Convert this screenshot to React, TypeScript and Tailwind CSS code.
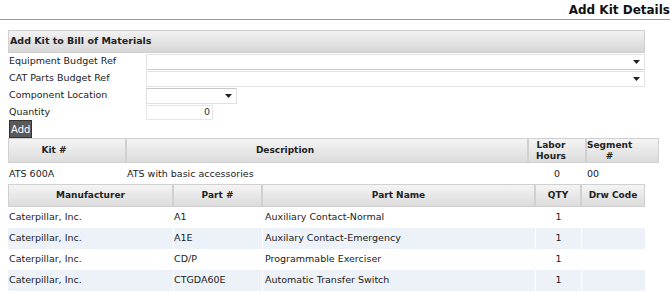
import React from "react";

const font = { fontFamily: '"DejaVu Sans", Verdana, sans-serif' };

function Caret() {
  return (
    <svg width="7" height="4" viewBox="0 0 7 4" className="shrink-0">
      <polygon points="0,0 7,0 3.5,4" fill="#222" />
    </svg>
  );
}

const parts = [
  ["Caterpillar, Inc.", "A1", "Auxiliary Contact-Normal", "1"],
  ["Caterpillar, Inc.", "A1E", "Auxilary Contact-Emergency", "1"],
  ["Caterpillar, Inc.", "CD/P", "Programmable Exerciser", "1"],
  ["Caterpillar, Inc.", "CTGDA60E", "Automatic Transfer Switch", "1"],
];

const thBase =
  "bg-gradient-to-b from-[#f4f4f4] to-[#dcdcdc] border border-[#d0d0d0] font-bold text-[9px] text-[#222] text-center flex items-center";
const th = thBase + " justify-center";

export default function App() {
  return (
    <div className="w-[670px] h-[294px] bg-white text-[9.5px] text-[#222] overflow-hidden" style={font}>
      <div className="h-[20px] border-b border-[#9a9a9a] flex items-center justify-end pr-[0px]">
        <span className="text-[12px] font-bold text-[#111]">Add Kit Details</span>
      </div>
      <div className="pl-[8px] pr-[25px] pt-[10px]">
        <div className="h-[23px] bg-gradient-to-b from-[#f2f2f2] to-[#d6d6d6] border border-[#cfcfcf] flex items-center pl-[1px] font-bold text-[9.5px]">
          Add Kit to Bill of Materials
        </div>
        <div className="flex items-center h-[17px]">
          <div className="w-[138px] pl-[1px]">Equipment Budget Ref</div>
          <div className="flex-1 h-[16px] border border-[#e3e3e3] border-b-[#cfcfcf] flex items-center justify-end pr-[4px]">
            <Caret />
          </div>
        </div>
        <div className="flex items-center h-[17px]">
          <div className="w-[138px] pl-[1px]">CAT Parts Budget Ref</div>
          <div className="flex-1 h-[16px] border border-[#e3e3e3] flex items-center justify-end pr-[4px]">
            <Caret />
          </div>
        </div>
        <div className="flex items-center h-[17px]">
          <div className="w-[138px] pl-[1px]">Component Location</div>
          <div className="w-[91px] h-[16px] border border-[#e0e0e0] border-t-[#c8c8c8] flex items-center justify-end pr-[4px]">
            <Caret />
          </div>
        </div>
        <div className="flex items-center h-[16px] pt-[1px]">
          <div className="w-[138px] pl-[1px]">Quantity</div>
          <div className="w-[67px] h-[15px] border border-[#e6e6e6] flex items-center justify-end pr-[2px] text-[#333]">
            0
          </div>
        </div>
        <div className="pl-[1px]">
          <div className="inline-flex items-center h-[18px] px-[1px] bg-[#5a5a5a] border border-[#333] text-white text-[10px]">
            Add
          </div>
        </div>
        <div className="grid grid-cols-[118px_402px_58px_1fr] h-[25px] leading-[11px]">
          <div className={thBase + " justify-center pr-[26px]"}>Kit #</div>
          <div className={thBase + " justify-center pr-[84px]"}>Description</div>
          <div className={thBase + " justify-center pr-[12px]"}>Labor<br />Hours</div>
          <div className={thBase + " justify-center pr-[26px]"}>Segment<br />#</div>
        </div>
        <div className="grid grid-cols-[118px_402px_58px_1fr] h-[21px] items-center pt-[1px]">
          <div className="pl-[1px]">ATS 600A</div>
          <div className="pl-[1px]">ATS with basic accessories</div>
          <div className="text-center">0</div>
          <div className="pl-[1px]">00</div>
        </div>
        <div className="grid grid-cols-[165px_89px_273px_46px_1fr] h-[23px]">
          <div className={th}>Manufacturer</div>
          <div className={th}>Part #</div>
          <div className={th}>Part Name</div>
          <div className={th}>QTY</div>
          <div className={th}>Drw Code</div>
        </div>
        {parts.map((p, i) => (
          <div
            key={i}
            className={
              "grid grid-cols-[165px_89px_273px_46px_1fr] h-[21px] items-stretch " +
              (i % 2 === 1 ? "bg-[#edf1f8]" : "bg-white")
            }
          >
            <div className="flex items-center pl-[1px]">{p[0]}</div>
            <div className="flex items-center border-l border-white">{p[1]}</div>
            <div className="flex items-center pl-[2px] border-l border-white">{p[2]}</div>
            <div className="flex items-center justify-center border-l border-white">{p[3]}</div>
            <div className="border-l border-white"></div>
          </div>
        ))}
      </div>
    </div>
  );
}
